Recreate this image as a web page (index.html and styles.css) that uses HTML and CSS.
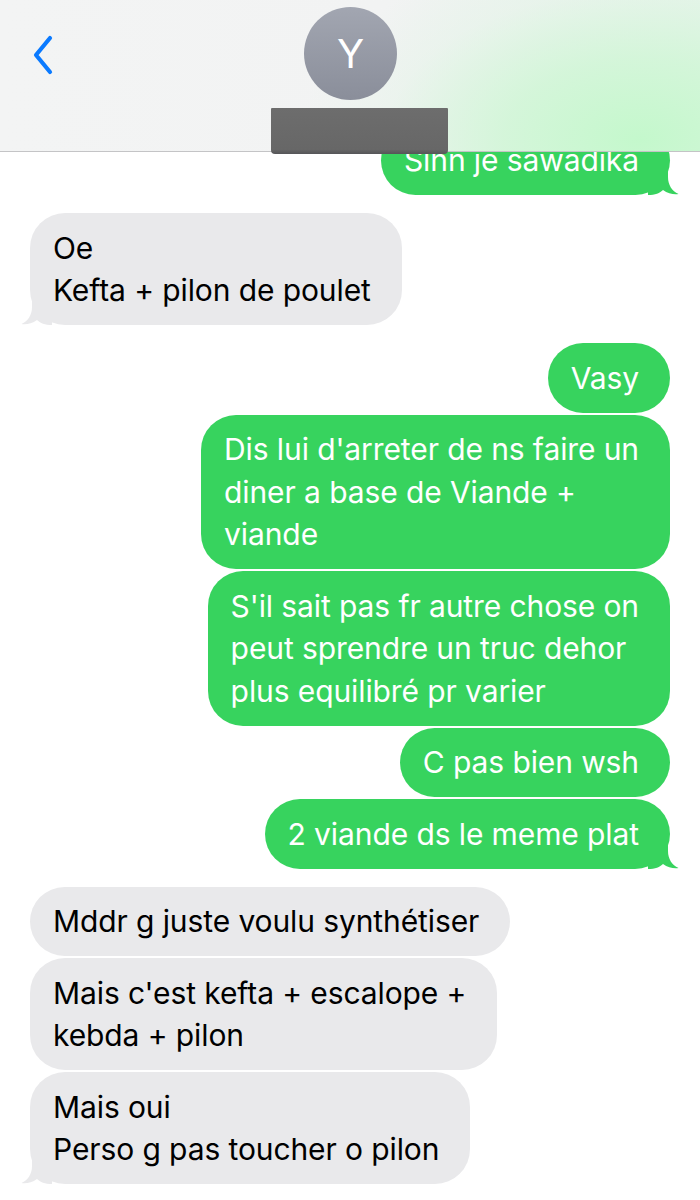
FILE: index.html
```html
<!DOCTYPE html>
<html lang="fr">
<head>
<meta charset="utf-8">
<link rel="stylesheet" href="styles.css">
</head>
<body>
<div class="screen">
  <header class="header">
    <svg class="back" width="24" height="40" viewBox="0 0 24 40"><path d="M19 3 L5 20 L19 37" fill="none" stroke="#0a7aff" stroke-width="4.2" stroke-linecap="round" stroke-linejoin="round"/></svg>
    <div class="contact">
      <div class="avatar">Y</div>
      <div class="redacted"></div>
    </div>
  </header>
  <main class="chat">
    <div class="group sent">
      <div class="bubble tail">Sinn je sawadika<svg class="tailsvg" viewBox="0 0 32 26"><path d="M0 0 H20 V8 C20 16 24 22 30.5 25 C26 25.8 20 24.6 15 21 C12 24 7 26 0 26 Z"/></svg></div>
    </div>
    <div class="group recv">
      <div class="bubble tail">Oe<br>Kefta + pilon de poulet<svg class="tailsvg" viewBox="0 0 32 26"><path d="M0 0 H20 V8 C20 16 24 22 30.5 25 C26 25.8 20 24.6 15 21 C12 24 7 26 0 26 Z"/></svg></div>
    </div>
    <div class="group sent">
      <div class="bubble">Vasy</div>
      <div class="bubble">Dis lui d'arreter de ns faire un<br>diner a base de Viande +<br>viande</div>
      <div class="bubble">S'il sait pas fr autre chose on<br>peut sprendre un truc dehor<br>plus equilibré pr varier</div>
      <div class="bubble">C pas bien wsh</div>
      <div class="bubble tail">2 viande ds le meme plat<svg class="tailsvg" viewBox="0 0 32 26"><path d="M0 0 H20 V8 C20 16 24 22 30.5 25 C26 25.8 20 24.6 15 21 C12 24 7 26 0 26 Z"/></svg></div>
    </div>
    <div class="group recv">
      <div class="bubble">Mddr g juste voulu synthétiser</div>
      <div class="bubble">Mais c'est kefta + escalope +<br>kebda + pilon</div>
      <div class="bubble tail">Mais oui<br>Perso g pas toucher o pilon<svg class="tailsvg" viewBox="0 0 32 26"><path d="M0 0 H20 V8 C20 16 24 22 30.5 25 C26 25.8 20 24.6 15 21 C12 24 7 26 0 26 Z"/></svg></div>
    </div>
  </main>
</div>
</body>
</html>
```

FILE: styles.css
```css
* { box-sizing: border-box; }
html, body { margin: 0; padding: 0; background: #ffffff; }
body {
  font-family: Inter, "Noto Sans", "Liberation Sans", sans-serif;
  width: 700px;
  height: 1200px;
  overflow: hidden;
}
.screen { width: 700px; }

.header {
  position: relative;
  z-index: 2;
  height: 152px;
  border-bottom: 1px solid #c4c4c6;
  background:
    radial-gradient(ellipse 340px 200px at 640px 140px, rgba(196, 248, 204, 1) 0%, rgba(208, 246, 214, 0.85) 40%, rgba(226, 244, 230, 0.4) 75%, rgba(242, 243, 243, 0) 100%),
    linear-gradient(90deg, #f3f4f4 0%, #f2f3f3 55%, #e6f4ea 100%);
  display: flex;
  align-items: flex-start;
}
.back {
  margin: 35px 0 0 31px;
  width: 24px;
  height: 40px;
}
.contact {
  position: absolute;
  left: 271px;
  top: 7px;
  width: 177px;
  display: flex;
  flex-direction: column;
  align-items: flex-start;
}
.avatar {
  margin-left: 33px;
  width: 93px;
  height: 93px;
  border-radius: 50%;
  background: linear-gradient(180deg, #a2a6b1 0%, #8a8e9a 100%);
  color: #ffffff;
  font-size: 40px;
  font-weight: 400;
  display: flex;
  align-items: center;
  justify-content: center;
  line-height: 1;
}
.redacted {
  margin-top: 8px;
  width: 177px;
  height: 46px;
  background: linear-gradient(180deg, #6d6d6d 0%, #676767 90%, #555558 100%);
  border-radius: 1px 1px 4px 4px;
}

.chat {
  margin-top: -26.5px;
  padding: 0 30px;
  display: flex;
  flex-direction: column;
  gap: 18px;
}
.group {
  display: flex;
  flex-direction: column;
  gap: 2px;
}
.group.sent { align-items: flex-end; }
.group.recv { align-items: flex-start; }

.bubble {
  position: relative;
  font-size: 30px;
  letter-spacing: -0.1px;
  line-height: 42.5px;
  padding: 13.5px 31px 13.5px 23px;
  border-radius: 35px;
  white-space: nowrap;
}
.sent .bubble { background: #37d35e; color: #ffffff; }
.recv .bubble { background: #e9e9eb; color: #000000; }

.tailsvg {
  position: absolute;
  bottom: 0;
  width: 32px;
  height: 26px;
}
.sent .tailsvg { right: -10px; fill: #37d35e; }
.recv .tailsvg { left: -10px; fill: #e9e9eb; transform: scaleX(-1); }
```
